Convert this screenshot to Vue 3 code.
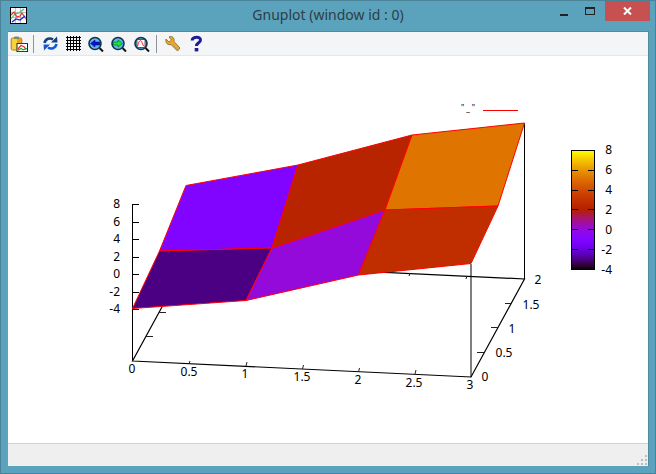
<template>
  <div class="window">
    <div class="titlebar">
      <svg class="app-icon" width="17" height="17" viewBox="0 0 17 17">
        <rect x="0.5" y="0.5" width="16" height="16" fill="#f8f8f8" stroke="#000" />
        <path d="M1 5.5 H16 M1 10.5 H16 M5.500 1 V16 M10.500 1 V16" stroke="#9a9a9a" stroke-width="0.6" />
        <path d="M1 12 L5 7 L9 6 L14 2" fill="none" stroke="#3cc860" stroke-width="1.2" />
        <path d="M1 8 L4 5 L7 10 L10 9 L12 6 L16 12" fill="none" stroke="#f03030" stroke-width="1.2" />
        <path d="M2 15 L6 12 L10 13 L15 9" fill="none" stroke="#2020e0" stroke-width="1.2" />
      </svg>
      <div class="title">Gnuplot (window id : 0)</div>
      <div class="controls">
        <div class="ctl"><span class="min"></span></div>
        <div class="ctl"><span class="max"></span></div>
        <div class="close">
          <svg width="9" height="8" viewBox="0 0 9 8">
            <path d="M1 0.5 L8 7.5 M8 0.5 L1 7.5" stroke="#fff" stroke-width="2" />
          </svg>
        </div>
      </div>
    </div>

    <div class="client">
      <div class="toolbar">
        <svg class="tb w18" viewBox="0 0 18 18" preserveAspectRatio="none">
          <rect x="1" y="2" width="11" height="14" rx="2" fill="#e6a41c" stroke="#a06c14" stroke-width="0.6" />
          <rect x="2" y="3" width="5" height="12" fill="#f8d23c" />
          <rect x="4" y="0.5" width="5" height="3" rx="1" fill="#85856a" />
          <rect x="7" y="8.500" width="10.500" height="9" fill="#fff" stroke="#222" />
          <path d="M8 14.500 L11 10.500 L14 12 L16 15" fill="none" stroke="#e82020" stroke-width="1.2" />
          <path d="M8 16 L11 14 L13 15.500 L17 14" fill="none" stroke="#10b030" stroke-width="1.2" />
        </svg>
        <span class="sep"></span>
        <svg class="tb w15 gap-l" viewBox="0 0 15 15">
          <path d="M1.500 7 C2.500 2.500 7 1.500 10 3.500" fill="none" stroke="#15407f" stroke-width="2.6" />
          <path d="M8 6.500 H14.500 L14 0.500 Z" fill="#15407f" />
          <path d="M13.500 8 C12.500 12.500 8 13.500 5 11.500" fill="none" stroke="#1258dc" stroke-width="2.6" />
          <path d="M7 8.500 H0.500 L1 14.500 Z" fill="#1258dc" />
        </svg>
        <svg class="tb w15 gap-g" viewBox="0 0 15 15">
          <path d="M2 0 V15 M5 0 V15 M8 0 V15 M11 0 V15 M14 0 V15" stroke="#000" transform="translate(-0.5 0)" />
          <path d="M0 1.500 H15 M0 4.500 H15 M0 7.500 H15 M0 10.500 H15 M0 13.500 H15" stroke="#000" />
        </svg>
        <svg class="tb w16 gap-m" viewBox="0 0 16 16">
          <path d="M11.500 12 L15 15.500" stroke="#111" stroke-width="2" />
          <circle cx="7" cy="7.500" r="6" fill="#62b6ee" stroke="#10364f" stroke-width="1.600" />
          <path d="M2.500 7.500 L7 4 V6 H11.800 V9 H7 V11 Z" fill="#0a10d8" stroke="#06063c" stroke-width="0.5" />
        </svg>
        <svg class="tb w16 gap-m" viewBox="0 0 16 16">
          <path d="M11.500 12 L15 15.500" stroke="#111" stroke-width="2" />
          <circle cx="7" cy="7.500" r="6" fill="#62b6ee" stroke="#10364f" stroke-width="1.600" />
          <path d="M11.500 7.500 L7 4 V6 H2.200 V9 H7 V11 Z" fill="#18e838" stroke="#064010" stroke-width="0.5" />
        </svg>
        <svg class="tb w16 gap-m" viewBox="0 0 16 16">
          <path d="M11.500 12 L15 15.500" stroke="#111" stroke-width="2" />
          <circle cx="7" cy="7.500" r="6" fill="#62b6ee" stroke="#10364f" stroke-width="1.600" />
          <rect x="3" y="3.500" width="8" height="8" fill="#fff" stroke="#223" stroke-width="0.7" />
          <path d="M3.500 10.500 C5 3.500 7 3.500 8 6.500 C8.500 8.500 9.500 10 10.500 10.500" fill="none" stroke="#e82020" />
        </svg>
        <span class="sep sep2"></span>
        <svg class="tb w16 gap-s" viewBox="0 0 16 16">
          <path d="M1 3 L4 6 L6.500 4 L4 1 C7 -0.500 10 2 9 5.500 L15 12 L12.500 15 L6 8.500 C3 9.500 0 7 1 3 Z" fill="#f2a61e" stroke="#7d6434" stroke-width="0.8" />
          <path d="M7 7.500 L13 14" stroke="#b0a080" stroke-width="0.8" />
        </svg>
        <svg class="tb w13 gap-q" viewBox="0 0 13 17">
          <path d="M2.200 5.500 C2.200 1.500 10.500 0.800 10.500 5 C10.500 8 6.500 7.500 6.500 11" fill="none" stroke="#1c1c98" stroke-width="3" />
          <rect x="4.700" y="13" width="3.600" height="3.400" fill="#1c1c98" />
        </svg>
      </div>

      <svg class="plot" width="640" height="387" viewBox="8 56 640 387">
        <g class="labels">
          <text x="461" y="110.500" class="key">"_"</text>
          <text v-for="t in zLabels" :key="t.text" x="120" :y="t.y + 4" text-anchor="end">{{ t.text }}</text>
          <text v-for="t in xLabels" :key="'x' + t.text" :x="t.x" :y="t.y + 4" text-anchor="middle">{{ t.text }}</text>
          <text v-for="t in yLabels" :key="'y' + t.text" :x="t.x" :y="t.y + 4" text-anchor="middle">{{ t.text }}</text>
          <text v-for="t in cbLabels" :key="'c' + t.text" x="612" :y="t.y + 4" text-anchor="end">{{ t.text }}</text>
        </g>

        <path d="M483 110.500 H518" stroke="#f00" />

        <!-- box behind the surface -->
        <path d="M132.500 361 L471 377 L524.500 279 L186 263 Z" fill="none" stroke="#000" stroke-width="1.200" />
        <path d="M471 264 V377 M524.500 123 V279" stroke="#000" fill="none" />
        <path d="M132.500 204 V361" stroke="#000" />
        <path v-for="t in zLabels" :key="'zt' + t.text" :d="`M132.500 ${Math.round(t.y) + 0.5} H139`" stroke="#000" />
        <path d="M190 361 L189 364 M247 362 L246 366 M303.500 365 L302.500 369 M359.500 368 L358.500 372 M416 370 L415 374 M410 273 L409 276 M467 276 L466 279" stroke="#222" />
        <path d="M146 336.500 H153 M159 312.500 H166 M477 352.500 H484 M491 327.500 H498 M505 303.500 H512" stroke="#222" />

        <polygon
          v-for="q in quads"
          :key="q.pts"
          :points="q.pts"
          :fill="q.fill"
          stroke="#f00"
          stroke-width="1"
          stroke-linejoin="round"
        />

        <!-- colour box -->
        <defs>
          <linearGradient id="cbar" x1="0" y1="1" x2="0" y2="0">
            <stop v-for="s in stops" :key="s.offset" :offset="s.offset" :stop-color="s.color" />
          </linearGradient>
        </defs>
        <rect x="571.500" y="150.500" width="23" height="119" fill="url(#cbar)" stroke="#000" />
        <path
          v-for="y in cbTicks"
          :key="y"
          :d="`M571 ${y + 0.5} H578 M588 ${y + 0.5} H595`"
          stroke="#000"
        />
      </svg>

      <div class="status">
        <svg class="grip" width="11" height="11" viewBox="0 0 11 11">
          <path d="M8 0 h2 v2 h-2z M4 4 h2 v2 h-2z M8 4 h2 v2 h-2z M0 8 h2 v2 h-2z M4 8 h2 v2 h-2z M8 8 h2 v2 h-2z" fill="#bdbdbd" />
        </svg>
      </div>
    </div>
  </div>
</template>

<script setup>
// pm3d default palette: rgbformulae 7,5,15
function palette(g) {
  const r = Math.sqrt(g)
  const gr = g * g * g
  const b = Math.max(0, Math.sin(2 * Math.PI * g))
  return `rgb(${Math.round(r * 255)},${Math.round(gr * 255)},${Math.round(b * 255)})`
}

const stops = Array.from({ length: 41 }, (_, i) => ({
  offset: i / 40,
  color: palette(i / 40)
}))

const quads = [
  { pts: '186,185.500 298,165 272,248 159.500,251', fill: palette(0.25) },
  { pts: '298,165 412,135 385,210 272,248', fill: palette(0.52) },
  { pts: '412,135 524.500,123 498,206 385,210', fill: palette(0.77) },
  { pts: '159.500,251 272,248 246,300.500 132.500,308.500', fill: palette(0.0865) },
  { pts: '272,248 385,210 358.500,275 246,300.500', fill: palette(0.337) },
  { pts: '385,210 498,206 471,263.500 358.500,275', fill: palette(0.565) }
]

const zLabels = [
  { text: '8', y: 204 },
  { text: '6', y: 221.5 },
  { text: '4', y: 239 },
  { text: '2', y: 256.5 },
  { text: '0', y: 274 },
  { text: '-2', y: 291.5 },
  { text: '-4', y: 309 }
]

const xLabels = [
  { text: '0', x: 132, y: 369 },
  { text: '0.5', x: 189, y: 372 },
  { text: '1', x: 245, y: 374 },
  { text: '1.5', x: 302, y: 377 },
  { text: '2', x: 358, y: 380 },
  { text: '2.5', x: 414, y: 383 },
  { text: '3', x: 470, y: 385 }
]

const yLabels = [
  { text: '0', x: 485, y: 377 },
  { text: '0.5', x: 504, y: 353 },
  { text: '1', x: 512, y: 329 },
  { text: '1.5', x: 531, y: 305 },
  { text: '2', x: 538, y: 280 }
]

const cbLabels = [
  { text: '8', y: 150 },
  { text: '6', y: 170 },
  { text: '4', y: 190 },
  { text: '2', y: 210 },
  { text: '0', y: 230 },
  { text: '-2', y: 250 },
  { text: '-4', y: 270 }
]

const cbTicks = [170, 190, 209, 229, 249]
</script>

<style>
html,
body {
  margin: 0;
  overflow: hidden;
}
</style>

<style scoped>
.window {
  width: 656px;
  height: 474px;
  box-sizing: border-box;
  background: #5ba3bd;
  border: 1px solid #4a8298;
  padding: 0 7px 7px;
  display: flex;
  flex-direction: column;
  font-family: "Noto Sans", sans-serif;
}
.titlebar {
  height: 30px;
  flex: none;
  display: flex;
  align-items: flex-start;
  position: relative;
}
.app-icon {
  margin: 6px 0 0 2px;
}
.title {
  position: absolute;
  left: 0;
  right: 0;
  top: 5px;
  text-align: center;
  font-size: 14px;
  line-height: 18px;
  color: #2e3d46;
}
.controls {
  margin-left: auto;
  display: flex;
  margin-right: -2px;
}
.ctl {
  width: 26px;
  height: 20px;
  display: flex;
  align-items: center;
  justify-content: center;
}
.min {
  width: 8px;
  height: 2px;
  margin-top: 8px;
  background: #222;
}
.max {
  width: 8px;
  height: 5px;
  margin-top: 0;
  border: 1px solid #222;
  border-top-width: 2px;
}
.close {
  width: 45px;
  height: 20px;
  margin-left: 2px;
  background: #c75050;
  display: flex;
  align-items: center;
  justify-content: center;
}
.client {
  flex: 1;
  display: flex;
  flex-direction: column;
  background: #fff;
  border-top: 1px solid #4f8ba1;
  box-shadow: 1px 0 0 #4f8ba1;
  min-height: 0;
}
.toolbar {
  height: 23px;
  flex: none;
  display: flex;
  align-items: center;
  padding-left: 2px;
  background: #f4f5f7;
  border-bottom: 1px solid #e6e6e6;
}
.tb {
  flex: none;
}
.w18 { width: 18px; height: 16px; margin-top: 1px; }
.w16 { width: 16px; height: 16px; margin-top: 1px; }
.w15 { width: 15px; height: 15px; }
.w13 { width: 13px; height: 17px; }
.sep {
  width: 1px;
  height: 18px;
  margin-left: 5px;
  background: #8f9498;
}
.sep2 {
  margin-left: 6px;
}
.gap-l { margin-left: 9px; }
.gap-g { margin-left: 8px; }
.gap-m { margin-left: 7px; }
.gap-s { margin-left: 8px; }
.gap-q { margin-left: 9px; }
.plot {
  display: block;
  flex: none;
}
.labels text {
  font-family: "Noto Sans", sans-serif;
  font-size: 12px;
  fill: #000;
}
.labels text.key {
  font-size: 8px;
  letter-spacing: 2px;
}
.status {
  flex: 1;
  position: relative;
  background: #efefef;
  border-top: 1px solid #d2d2d2;
}
.grip {
  position: absolute;
  right: 0;
  bottom: 0;
}
</style>
